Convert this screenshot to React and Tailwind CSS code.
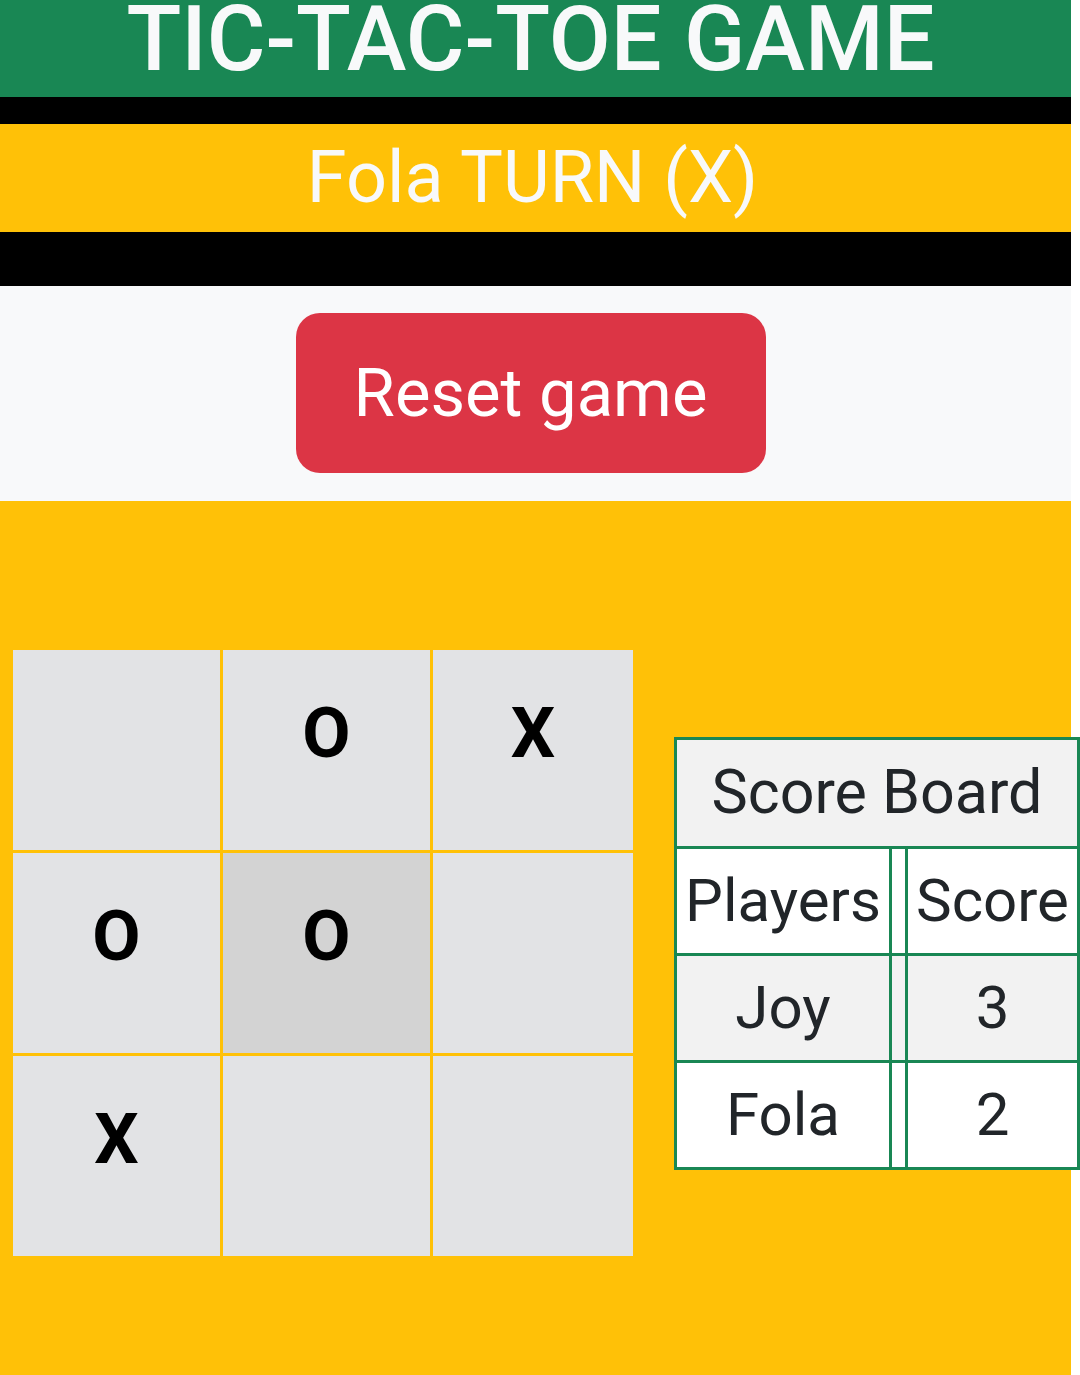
import { useState } from 'react';

const initialBoard = ['', 'O', 'X', 'O', 'O', '', 'X', '', ''];

const Cell = ({ value, active, onClick }) => (
  <button
    type="button"
    onClick={onClick}
    className={`h-[200px] flex justify-center pt-[48px] text-[70px] font-bold leading-none text-black ${
      active ? 'bg-[#d3d3d3]' : 'bg-[#e2e3e5]'
    }`}
  >
    {value}
  </button>
);

const ScoreRow = ({ name, score, shaded, last }) => (
  <div
    className={`flex text-[60px] text-[#212529] ${shaded ? 'bg-[#f2f2f2]' : 'bg-white'} ${
      last ? 'h-[104px]' : 'h-[107px] border-b-[3px] border-[#198754]'
    }`}
  >
    <div className="w-[215px] flex items-center justify-center border-r-[3px] border-[#198754]">{name}</div>
    <div className="w-[16px] border-r-[3px] border-[#198754]" />
    <div className="flex-1 flex items-center justify-center">{score}</div>
  </div>
);

const App = () => {
  const [board, setBoard] = useState(initialBoard);
  const [selected, setSelected] = useState(4);

  const resetGame = () => {
    setBoard(Array(9).fill(''));
    setSelected(null);
  };

  return (
    <div className="w-[1071px] min-h-[1375px] bg-[#ffc107] font-['Roboto','Liberation_Sans',sans-serif]">
      <header className="h-[97px] bg-[#198754] flex justify-center overflow-hidden pr-[10px]">
        <h1 className="text-[90px] font-medium leading-none text-[#f8f9fa] -mt-[5px]">TIC-TAC-TOE GAME</h1>
      </header>
      <div className="h-[27px] bg-black" />
      <div className="h-[108px] bg-[#ffc107] flex items-center justify-center pr-[6px]">
        <h2 className="text-[72px] leading-none text-[#f8f9fa]">Fola TURN (X)</h2>
      </div>
      <div className="h-[54px] bg-black" />
      <div className="h-[215px] bg-[#f8f9fa] flex justify-center pt-[27px] pr-[10px]">
        <button
          type="button"
          onClick={resetGame}
          className="w-[470px] h-[160px] rounded-[24px] bg-[#dc3545] text-[67px] leading-none text-white"
        >
          Reset game
        </button>
      </div>
      <main className="h-[874px] flex items-center pl-[13px] pt-[30px] gap-[41px]">
        <div className="grid grid-cols-[207px_207px_200px] gap-[3px]">
          {board.map((value, i) => (
            <Cell key={i} value={value} active={selected === i} onClick={() => setSelected(i)} />
          ))}
        </div>
        <div className="w-[406px] shrink-0 border-[3px] border-[#198754]">
          <div className="h-[109px] bg-[#f2f2f2] flex items-center justify-center text-[61px] text-[#212529] border-b-[3px] border-[#198754]">
            Score Board
          </div>
          <ScoreRow name="Players" score="Score" />
          <ScoreRow name="Joy" score="3" shaded />
          <ScoreRow name="Fola" score="2" last />
        </div>
      </main>
    </div>
  );
};

export default App;
